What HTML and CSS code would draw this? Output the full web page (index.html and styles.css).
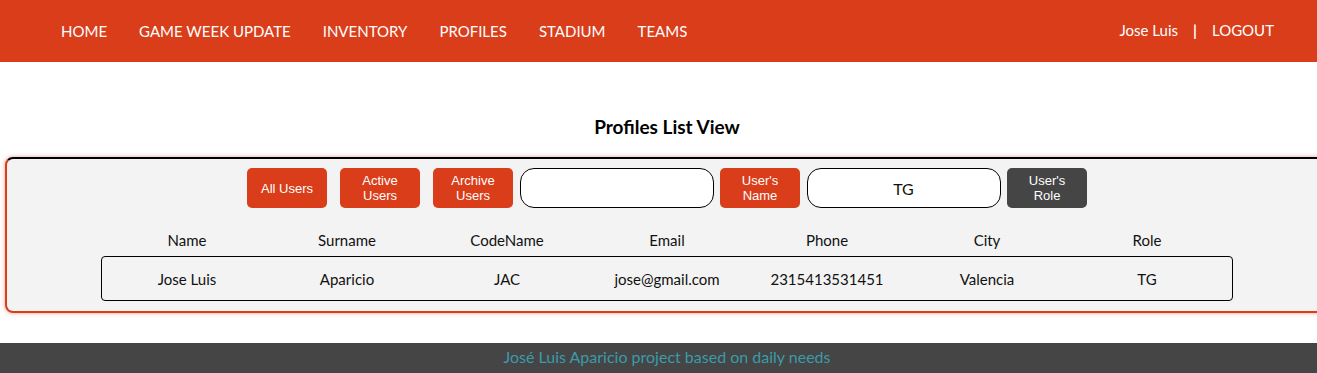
FILE: index.html
```html
<!DOCTYPE html>
<html lang="en">
<head>
    <meta charset="UTF-8">
    <title>Profiles List View</title>
    <link rel="stylesheet" href="styles.css">
</head>
<body>
    <nav class="navbar">
        <ul class="nav-links">
            <li><a href="#">HOME</a></li>
            <li><a href="#">GAME WEEK UPDATE</a></li>
            <li><a href="#">INVENTORY</a></li>
            <li><a href="#">PROFILES</a></li>
            <li><a href="#">STADIUM</a></li>
            <li><a href="#">TEAMS</a></li>
        </ul>
        <div class="nav-user">
            <span>Jose Luis</span>
            <span class="sep">|</span>
            <a href="#">LOGOUT</a>
        </div>
    </nav>

    <main>
        <h1>Profiles List View</h1>

        <div class="panel">
            <div class="filters">
                <button class="btn">All Users</button>
                <button class="btn">Active Users</button>
                <button class="btn">Archive Users</button>
                <input type="text" class="search" value="">
                <button class="btn">User's Name</button>
                <input type="text" class="search" value="TG">
                <button class="btn btn-dark">User's Role</button>
            </div>

            <div class="table-head">
                <span>Name</span>
                <span>Surname</span>
                <span>CodeName</span>
                <span>Email</span>
                <span>Phone</span>
                <span>City</span>
                <span>Role</span>
            </div>

            <div class="table-row">
                <span>Jose Luis</span>
                <span>Aparicio</span>
                <span>JAC</span>
                <span>jose@gmail.com</span>
                <span>2315413531451</span>
                <span>Valencia</span>
                <span>TG</span>
            </div>
        </div>
    </main>

    <footer class="footer">José Luis Aparicio project based on daily needs</footer>
</body>
</html>
```

FILE: styles.css
```css
html {
    overflow: hidden;
}
body {
    font-family: Lato, 'Open Sans', sans-serif;
    margin: 0;
    padding: 0;
    width: 1334px;
    background-color: white;
    color: #111;
}
.navbar {
    background-color: #d93d1a;
    height: 62px;
    padding: 0 60px 2px 61px;
    display: flex;
    justify-content: space-between;
    align-items: center;
    box-sizing: border-box;
}
.nav-links {
    list-style: none;
    display: flex;
    gap: 32px;
    margin: 0;
    padding: 0;
}
.nav-links a,
.nav-user a,
.nav-user span {
    color: white;
    text-decoration: none;
    font-size: 15px;
}
.nav-user {
    display: flex;
    align-items: center;
}
.nav-user .sep {
    margin: 0 15px;
    font-weight: bold;
}
main {
    padding-top: 53px;
    padding-bottom: 30px;
}
h1 {
    text-align: center;
    font-size: 19px;
    line-height: 23px;
    font-weight: bold;
    margin: 0 0 19px;
    color: #000;
}
.panel {
    margin: 0 5px;
    background-color: #f3f3f3;
    border: 2px solid #d93d1a;
    border-top-color: #000;
    border-radius: 8px;
    box-shadow: 0 0 4px rgba(217, 61, 26, 0.5);
    padding: 9px 0 10px;
}
.filters {
    display: flex;
    justify-content: center;
    align-items: center;
}
.btn {
    width: 80px;
    height: 40px;
    margin: 0 6.5px;
    background-color: #d93d1a;
    color: white;
    border: none;
    border-radius: 5px;
    font-family: 'Liberation Sans', Arial, sans-serif;
    font-size: 13px;
    line-height: 15px;
    padding: 0 10px;
    cursor: pointer;
}
.btn-dark {
    background-color: #454545;
}
.search {
    width: 194px;
    height: 40px;
    box-sizing: border-box;
    border: 1px solid #000;
    border-radius: 14px;
    background: white;
    text-align: center;
    font-family: Lato, 'Open Sans', sans-serif;
    font-size: 16px;
    color: #111;
    outline: none;
}
.table-head,
.table-row {
    display: grid;
    grid-template-columns: repeat(7, 160px);
    justify-content: center;
    font-size: 15px;
}
.table-head {
    margin-top: 22px;
    height: 20px;
    align-items: center;
    text-align: center;
}
.table-row {
    margin: 6px 94px 0;
    height: 45px;
    box-sizing: border-box;
    border: 1px solid #000;
    border-radius: 4px;
    align-items: center;
    text-align: center;
}
.footer {
    background-color: #454545;
    color: #3a9bab;
    text-align: center;
    font-size: 16px;
    padding: 4px 0 10px;
}
```
